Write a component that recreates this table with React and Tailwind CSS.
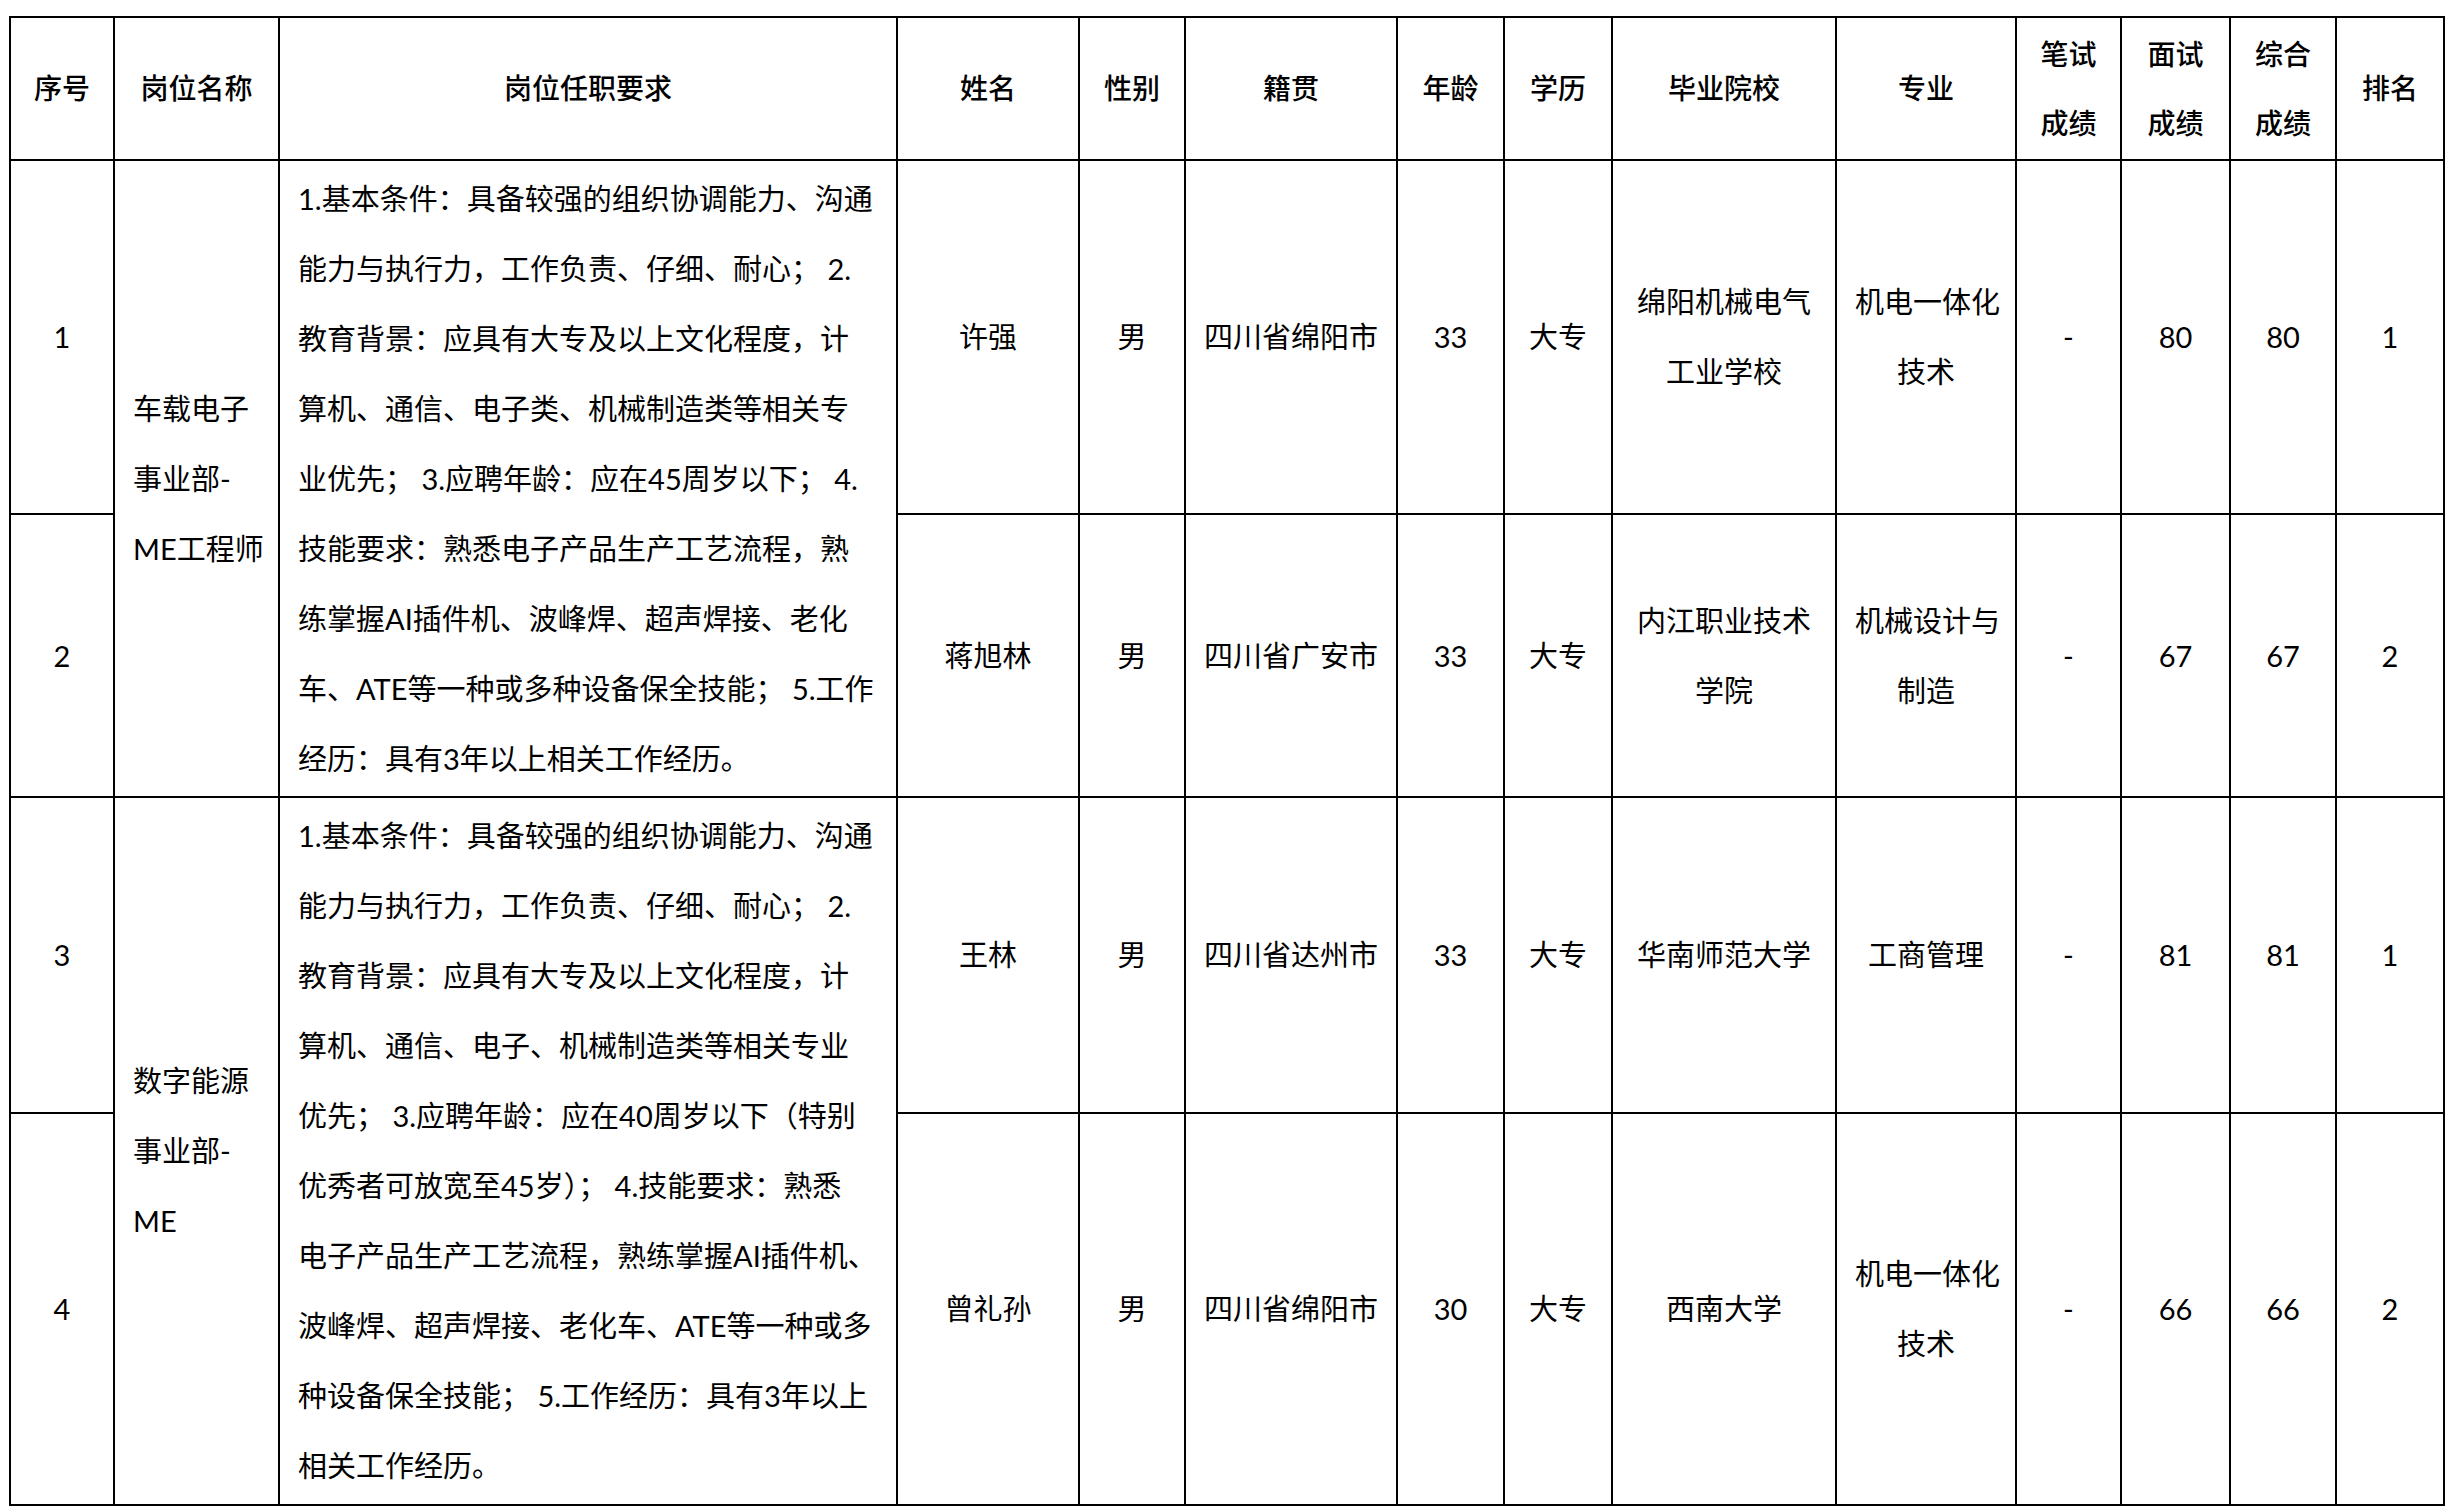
import React from 'react'

const FONT = 'Lato, "Noto Sans CJK SC", sans-serif'

const widths = [104, 165, 618, 182, 106, 212, 107, 108, 224, 180, 105, 109, 106, 108]

const headers = [
  ['序号'],
  ['岗位名称'],
  ['岗位任职要求'],
  ['姓名'],
  ['性别'],
  ['籍贯'],
  ['年龄'],
  ['学历'],
  ['毕业院校'],
  ['专业'],
  ['笔试', '成绩'],
  ['面试', '成绩'],
  ['综合', '成绩'],
  ['排名'],
]

const groups = [
  {
    post: ['车载电子', '事业部-', 'ME工程师'],
    req: [
      '1.基本条件：具备较强的组织协调能力、沟通',
      '能力与执行力，工作负责、仔细、耐心； 2.',
      '教育背景：应具有大专及以上文化程度，计',
      '算机、通信、电子类、机械制造类等相关专',
      '业优先； 3.应聘年龄：应在45周岁以下； 4.',
      '技能要求：熟悉电子产品生产工艺流程，熟',
      '练掌握AI插件机、波峰焊、超声焊接、老化',
      '车、ATE等一种或多种设备保全技能； 5.工作',
      '经历：具有3年以上相关工作经历。',
    ],
    rows: [
      { h: 'h-[354px]', no: '1', name: '许强', sex: '男', from: '四川省绵阳市', age: '33', edu: '大专', school: ['绵阳机械电气', '工业学校'], major: ['机电一体化', '技术'], written: '-', interview: '80', total: '80', rank: '1' },
      { h: 'h-[283px]', no: '2', name: '蒋旭林', sex: '男', from: '四川省广安市', age: '33', edu: '大专', school: ['内江职业技术', '学院'], major: ['机械设计与', '制造'], written: '-', interview: '67', total: '67', rank: '2' },
    ],
  },
  {
    post: ['数字能源', '事业部-', 'ME'],
    req: [
      '1.基本条件：具备较强的组织协调能力、沟通',
      '能力与执行力，工作负责、仔细、耐心； 2.',
      '教育背景：应具有大专及以上文化程度，计',
      '算机、通信、电子、机械制造类等相关专业',
      '优先； 3.应聘年龄：应在40周岁以下（特别',
      '优秀者可放宽至45岁）； 4.技能要求：熟悉',
      '电子产品生产工艺流程，熟练掌握AI插件机、',
      '波峰焊、超声焊接、老化车、ATE等一种或多',
      '种设备保全技能； 5.工作经历：具有3年以上',
      '相关工作经历。',
    ],
    rows: [
      { h: 'h-[316px]', no: '3', name: '王林', sex: '男', from: '四川省达州市', age: '33', edu: '大专', school: ['华南师范大学'], major: ['工商管理'], written: '-', interview: '81', total: '81', rank: '1' },
      { h: 'h-[392px]', no: '4', name: '曾礼孙', sex: '男', from: '四川省绵阳市', age: '30', edu: '大专', school: ['西南大学'], major: ['机电一体化', '技术'], written: '-', interview: '66', total: '66', rank: '2' },
    ],
  },
]

function Lines({ lines }) {
  return lines.map((l, i) => (
    <div key={i} className="whitespace-nowrap">{l}</div>
  ))
}

function Cell({ children, left, rowSpan }) {
  return (
    <td
      rowSpan={rowSpan}
      className={`border-2 border-black px-[18px] py-0 align-middle text-[29px] font-normal leading-[70px] text-black ${left ? 'text-left' : 'text-center'}`}
    >
      {children}
    </td>
  )
}

export default function App() {
  return (
    <div className="min-h-screen bg-white pl-[9px] pt-[16px]" style={{ fontFamily: FONT }}>
      <table className="table-fixed border-collapse" style={{ width: 2434 }}>
        <colgroup>
          {widths.map((w, i) => (
            <col key={i} style={{ width: w }} />
          ))}
        </colgroup>
        <thead>
          <tr className="h-[143px]">
            {headers.map((h, i) => (
              <th
                key={i}
                className="border-2 border-black px-[10px] py-0 align-middle text-center text-[28px] font-medium leading-[69px] text-black"
              >
                <Lines lines={h} />
              </th>
            ))}
          </tr>
        </thead>
        <tbody>
          {groups.map((g, gi) =>
            g.rows.map((r, ri) => (
              <tr key={`${gi}-${ri}`} className={r.h}>
                <Cell>{r.no}</Cell>
                {ri === 0 && (
                  <>
                    <Cell left rowSpan={g.rows.length}>
                      <Lines lines={g.post} />
                    </Cell>
                    <Cell left rowSpan={g.rows.length}>
                      <Lines lines={g.req} />
                    </Cell>
                  </>
                )}
                <Cell>{r.name}</Cell>
                <Cell>{r.sex}</Cell>
                <Cell>{r.from}</Cell>
                <Cell>{r.age}</Cell>
                <Cell>{r.edu}</Cell>
                <Cell><Lines lines={r.school} /></Cell>
                <Cell><Lines lines={r.major} /></Cell>
                <Cell>{r.written}</Cell>
                <Cell>{r.interview}</Cell>
                <Cell>{r.total}</Cell>
                <Cell>{r.rank}</Cell>
              </tr>
            ))
          )}
        </tbody>
      </table>
    </div>
  )
}
